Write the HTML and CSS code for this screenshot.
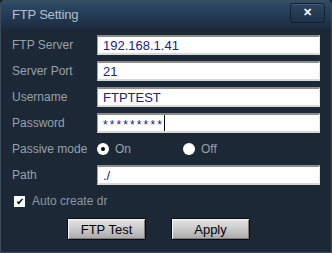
FILE: index.html
```html
<!DOCTYPE html>
<html>
  <head>
    <meta name="viewport" content="width=device-width, initial-scale=1.0">
    <link rel="stylesheet" href="styles.css">
  </head>
  <body>
    <div class="dialog">
      <div class="titlebar">
        <span class="title">FTP Setting</span>
        <div class="close">&#x2715;</div>
      </div>

      <div class="form">
        <label>FTP Server</label>
        <div class="field">192.168.1.41</div>

        <label>Server Port</label>
        <div class="field">21</div>

        <label>Username</label>
        <div class="field">FTPTEST</div>

        <label>Password</label>
        <div class="field"><span class="stars">*********</span><span class="caret"></span></div>

        <label>Passive mode</label>
        <div class="radios">
          <span class="radio checked"></span><span class="opt">On</span>
          <span class="radio off"></span><span class="opt">Off</span>
        </div>

        <label>Path</label>
        <div class="field">./</div>
      </div>

      <div class="check-row">
        <span class="checkbox">&#x2714;</span>
        <span class="check-label">Auto create dr</span>
      </div>

      <div class="buttons">
        <div class="btn">FTP Test</div>
        <div class="btn">Apply</div>
      </div>
    </div>
  </body>
</html>
```

FILE: styles.css
```css
/* Page */
body {
  margin: 0;
  background-color: #141d27;
  font-family: "Liberation Sans", Arial, sans-serif;
}

/* Dialog frame */
.dialog {
  width: 330px;
  height: 251px;
  border: 1px solid #3c4c5c;
  border-radius: 4px 4px 0 0;
  background-color: #1c2835;
  display: flex;
  flex-direction: column;
}

/* Title bar */
.titlebar {
  height: 27px;
  display: flex;
  align-items: center;
  justify-content: space-between;
  padding: 0 6px 0 11px;
  background: linear-gradient(#304c68, #233a52 55%, #1c2d40);
  border-radius: 3px 3px 0 0;
}

.title {
  font-size: 13px;
  color: #b4bec8;
  letter-spacing: -0.2px;
}

.close {
  width: 33px;
  height: 18px;
  border: 1px solid #13202e;
  border-radius: 3px;
  background: linear-gradient(#2c4560, #1e3248);
  box-shadow: inset 0 1px 0 #40597a;
  color: #ffffff;
  font-size: 11px;
  font-weight: bold;
  display: flex;
  align-items: center;
  justify-content: center;
  margin-top: -4px;
}

/* Form grid */
.form {
  display: grid;
  grid-template-columns: 85px 223px;
  row-gap: 6px;
  padding: 7px 0 0 11px;
  align-items: center;
}

.form label {
  font-size: 12px;
  color: #98a2ac;
}

.field {
  height: 16px;
  border-top: 2px solid #8c8c8c;
  border-left: 1px solid #a0a0a0;
  border-bottom: 2px solid #d8d8d8;
  border-right: 1px solid #e8e8e8;
  background-color: #ffffff;
  font-size: 13px;
  color: #22227a;
  padding-left: 5px;
  display: flex;
  align-items: center;
}

.stars {
  letter-spacing: 2.1px;
  font-size: 12px;
  margin-top: 3px;
}

.caret {
  width: 1px;
  height: 16px;
  background-color: #000000;
}

/* Radio row */
.radios {
  height: 20px;
  display: flex;
  align-items: center;
}

.radio {
  width: 12px;
  height: 12px;
  border-radius: 50%;
  background-color: #ffffff;
  display: flex;
  align-items: center;
  justify-content: center;
}

.radio.checked::after {
  content: "";
  width: 4px;
  height: 4px;
  border-radius: 50%;
  background-color: #000000;
}

.opt {
  font-size: 12px;
  color: #98a2ac;
  margin-left: 6px;
  width: 68px;
}

/* Checkbox row */
.check-row {
  display: flex;
  align-items: center;
  padding: 9px 0 0 13px;
}

.checkbox {
  width: 11px;
  height: 11px;
  background-color: #ffffff;
  color: #000000;
  font-size: 10px;
  line-height: 11px;
  text-align: center;
}

.check-label {
  font-size: 12px;
  color: #8c96a0;
  margin-left: 7px;
}

/* Buttons */
.buttons {
  display: flex;
  gap: 25px;
  padding: 10px 0 0 66px;
}

.btn {
  width: 77px;
  height: 20px;
  border: 1px solid #0c0c0c;
  background: linear-gradient(#e6e6e6, #c4c4c4 60%, #a8a8a8);
  box-shadow: inset 1px 1px 0 #f4f4f4, inset -1px -1px 0 #7c7c7c;
  font-size: 13px;
  color: #000000;
  display: flex;
  align-items: center;
  justify-content: center;
}
```
